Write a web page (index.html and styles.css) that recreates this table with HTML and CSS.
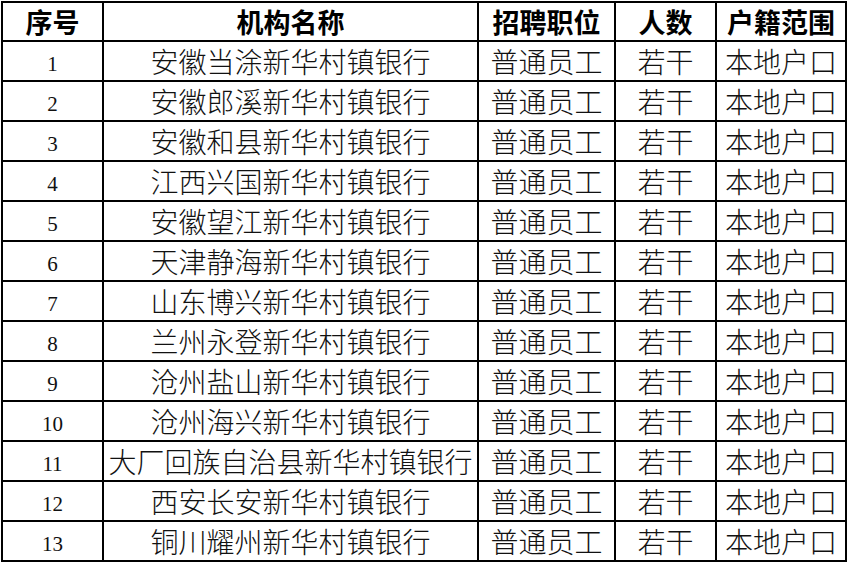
FILE: index.html
```html
<!DOCTYPE html>
<html lang="zh">
<head>
<meta charset="utf-8">
<title>招聘表</title>
<link rel="stylesheet" href="styles.css">
</head>
<body>
<div class="table">
  <div class="cell head">序号</div>
  <div class="cell head">机构名称</div>
  <div class="cell head">招聘职位</div>
  <div class="cell head">人数</div>
  <div class="cell head">户籍范围</div>

  <div class="cell num">1</div><div class="cell">安徽当涂新华村镇银行</div><div class="cell">普通员工</div><div class="cell">若干</div><div class="cell">本地户口</div>
  <div class="cell num">2</div><div class="cell">安徽郎溪新华村镇银行</div><div class="cell">普通员工</div><div class="cell">若干</div><div class="cell">本地户口</div>
  <div class="cell num">3</div><div class="cell">安徽和县新华村镇银行</div><div class="cell">普通员工</div><div class="cell">若干</div><div class="cell">本地户口</div>
  <div class="cell num">4</div><div class="cell">江西兴国新华村镇银行</div><div class="cell">普通员工</div><div class="cell">若干</div><div class="cell">本地户口</div>
  <div class="cell num">5</div><div class="cell">安徽望江新华村镇银行</div><div class="cell">普通员工</div><div class="cell">若干</div><div class="cell">本地户口</div>
  <div class="cell num">6</div><div class="cell">天津静海新华村镇银行</div><div class="cell">普通员工</div><div class="cell">若干</div><div class="cell">本地户口</div>
  <div class="cell num">7</div><div class="cell">山东博兴新华村镇银行</div><div class="cell">普通员工</div><div class="cell">若干</div><div class="cell">本地户口</div>
  <div class="cell num">8</div><div class="cell">兰州永登新华村镇银行</div><div class="cell">普通员工</div><div class="cell">若干</div><div class="cell">本地户口</div>
  <div class="cell num">9</div><div class="cell">沧州盐山新华村镇银行</div><div class="cell">普通员工</div><div class="cell">若干</div><div class="cell">本地户口</div>
  <div class="cell num">10</div><div class="cell">沧州海兴新华村镇银行</div><div class="cell">普通员工</div><div class="cell">若干</div><div class="cell">本地户口</div>
  <div class="cell num">11</div><div class="cell">大厂回族自治县新华村镇银行</div><div class="cell">普通员工</div><div class="cell">若干</div><div class="cell">本地户口</div>
  <div class="cell num">12</div><div class="cell">西安长安新华村镇银行</div><div class="cell">普通员工</div><div class="cell">若干</div><div class="cell">本地户口</div>
  <div class="cell num">13</div><div class="cell">铜川耀州新华村镇银行</div><div class="cell">普通员工</div><div class="cell">若干</div><div class="cell">本地户口</div>
</div>
</body>
</html>
```

FILE: styles.css
```css
html, body {
  margin: 0;
  padding: 0;
  background: #ffffff;
}

body {
  padding: 1px 0 0 1px;
}

.table {
  display: grid;
  width: max-content;
  grid-template-columns: 99px 373px 135px 99px 128px;
  grid-template-rows: 37px repeat(13, 38px);
  gap: 2px;
  padding: 2px;
  background: #000000;
}

.cell {
  background: #ffffff;
  display: flex;
  align-items: center;
  justify-content: center;
  font-family: "Noto Sans CJK SC", sans-serif;
  font-size: 28px;
  font-weight: 300;
  color: #111111;
  line-height: 1;
  white-space: nowrap;
}

.head {
  font-size: 27px;
  font-weight: 700;
  color: #000000;
}

.num {
  font-family: "Liberation Serif", "Times New Roman", serif;
  font-size: 21px;
  font-weight: 400;
  padding-top: 6px;
}
```
